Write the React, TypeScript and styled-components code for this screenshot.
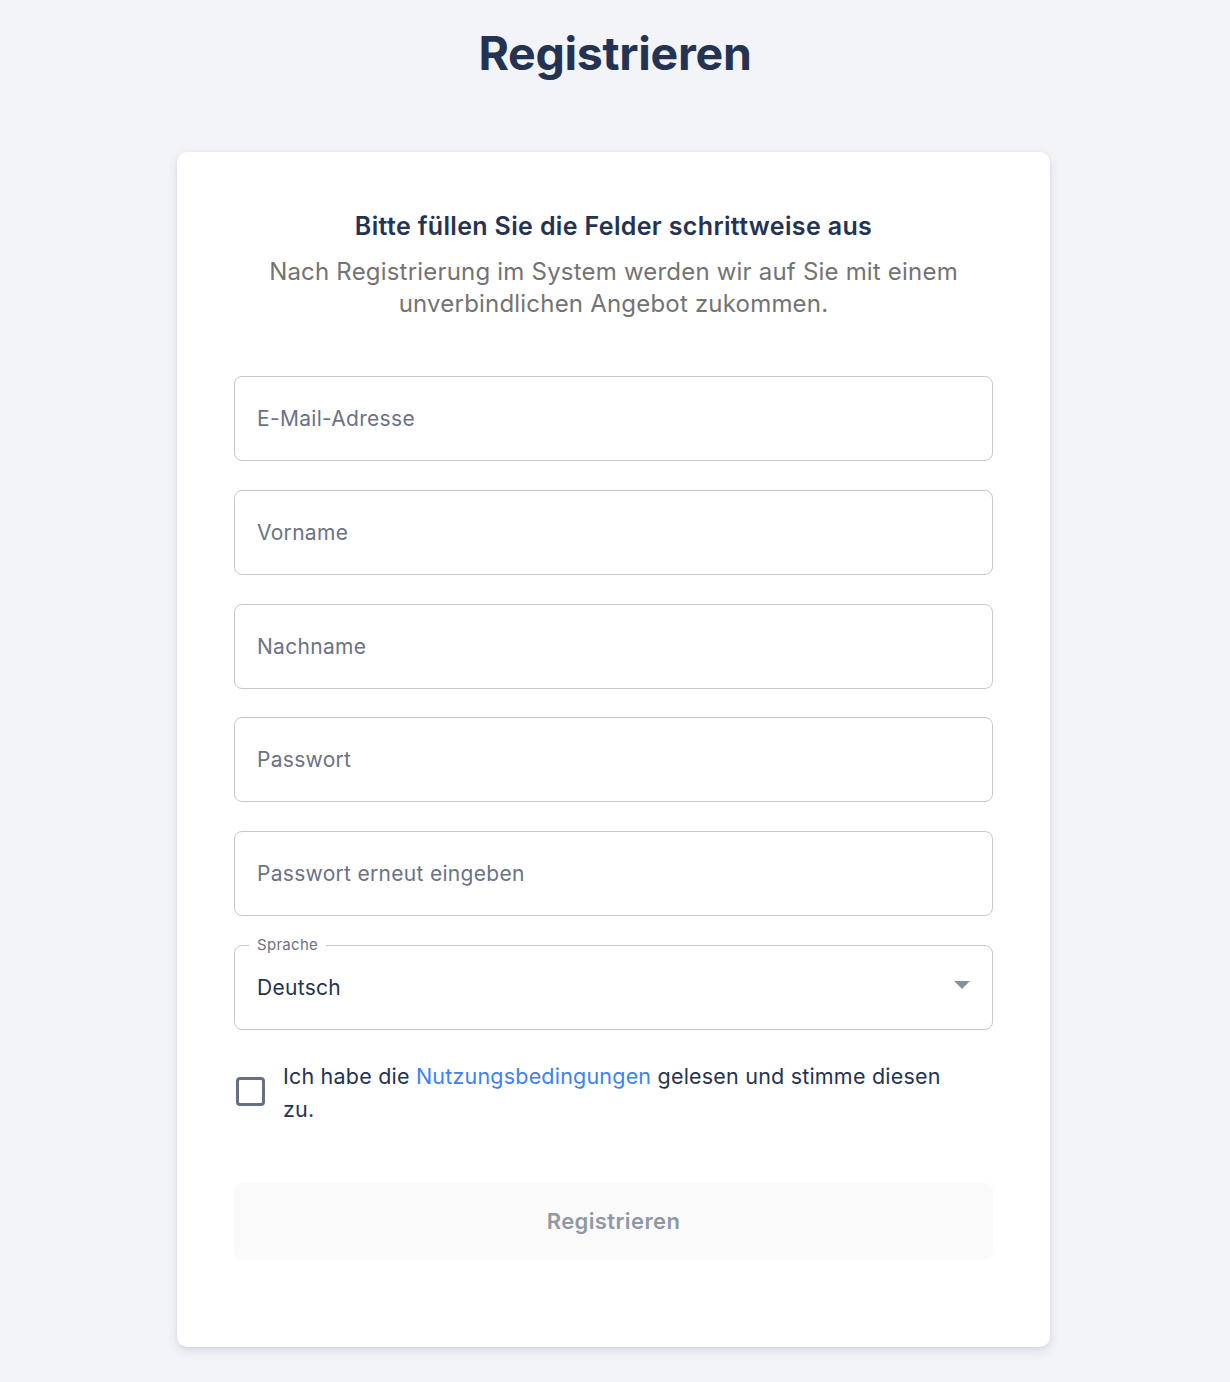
import React from "react";
import styled, { createGlobalStyle } from "styled-components";

const Global = createGlobalStyle`
  html, body { margin: 0; padding: 0; background: #f3f4f8; }
  body { font-family: Inter, "Noto Sans", sans-serif; -webkit-font-smoothing: antialiased; }
  * { box-sizing: border-box; }
`;

const Page = styled.div`
  min-height: 1382px;
  display: flex;
  flex-direction: column;
  align-items: center;
  padding-top: 24px;
`;

const Title = styled.h1`
  margin: 0;
  font-size: 46.5px;
  line-height: 58px;
  font-weight: 700;
  color: #253352;
  letter-spacing: -0.3px;
`;

const Card = styled.div`
  margin-top: 70px;
  margin-right: 3px;
  width: 873px;
  background: #fff;
  border-radius: 10px;
  box-shadow: 0 4px 12px rgba(40, 50, 100, 0.12), 0 1px 3px rgba(40, 50, 100, 0.08);
  padding: 58px 57px 87px;
  display: flex;
  flex-direction: column;
`;

const CardHeading = styled.h2`
  margin: 0;
  text-align: center;
  font-size: 25px;
  line-height: 32px;
  font-weight: 600;
  letter-spacing: 0.35px;
  color: #253352;
`;

const Subtitle = styled.p`
  margin: 14px 0 0;
  text-align: center;
  font-size: 24px;
  line-height: 32px;
  font-weight: 400;
  letter-spacing: 0.2px;
  color: #737373;
  padding: 0 20px;
`;

const Form = styled.form`
  margin-top: 56px;
  display: flex;
  flex-direction: column;
  gap: 28.8px;
`;

const Input = styled.input`
  width: 100%;
  height: 85px;
  border: 1px solid #c8c8cc;
  border-radius: 8px;
  padding: 0 22px;
  font-family: Inter, sans-serif;
  font-size: 21px;
  letter-spacing: 0.3px;
  color: #253352;
  background: #fff;
  outline: none;
  &::placeholder { color: #6b7286; opacity: 1; }
`;

const SelectBox = styled.div`
  position: relative;
  height: 85px;
  border: 1px solid #c8c8cc;
  border-radius: 8px;
  padding: 0 22px;
  display: flex;
  align-items: center;
`;

const FloatingLabel = styled.span`
  position: absolute;
  top: -11px;
  left: 14px;
  font-size: 15px;
  line-height: 20px;
  letter-spacing: 0.3px;
  color: #6b7286;
  padding: 0 8px;
  background: #fff;
`;

const SelectValue = styled.span`
  font-size: 21px;
  letter-spacing: 0.3px;
  color: #253352;
  flex: 1;
`;

const Caret = styled.span`
  width: 0;
  height: 0;
  border-left: 8px solid transparent;
  border-right: 8px solid transparent;
  border-top: 8px solid #8a8f9c;
  margin-top: -4px;
`;

const CheckRow = styled.label`
  display: flex;
  align-items: flex-start;
  gap: 18px;
  margin-top: 1px;
`;

const Box = styled.span`
  flex: none;
  width: 29px;
  height: 29px;
  border: 3px solid #676f84;
  border-radius: 4px;
  margin-top: 17px;
  margin-left: 2px;
`;

const CheckText = styled.span`
  max-width: 662px;
  font-size: 21.5px;
  line-height: 33px;
  letter-spacing: 0.2px;
  color: #253352;
`;

const Link = styled.a`
  color: #3b82f6;
  text-decoration: none;
`;

const Button = styled.button`
  margin-top: 28px;
  height: 77px;
  border: none;
  border-radius: 8px;
  background: #fafafa;
  font-family: Inter, sans-serif;
  font-size: 22px;
  font-weight: 600;
  letter-spacing: 0.4px;
  color: #9097a5;
`;

export default function App() {
  return (
    <>
      <Global />
      <Page>
        <Title>Registrieren</Title>
        <Card>
          <CardHeading>Bitte füllen Sie die Felder schrittweise aus</CardHeading>
          <Subtitle>
            Nach Registrierung im System werden wir auf Sie mit einem unverbindlichen Angebot zukommen.
          </Subtitle>
          <Form onSubmit={(e) => e.preventDefault()}>
            <Input placeholder="E-Mail-Adresse" />
            <Input placeholder="Vorname" />
            <Input placeholder="Nachname" />
            <Input placeholder="Passwort" type="password" />
            <Input placeholder="Passwort erneut eingeben" type="password" />
            <SelectBox>
              <FloatingLabel>Sprache</FloatingLabel>
              <SelectValue>Deutsch</SelectValue>
              <Caret />
            </SelectBox>
            <CheckRow>
              <Box />
              <CheckText>
                Ich habe die <Link href="#">Nutzungsbedingungen</Link> gelesen und stimme diesen zu.
              </CheckText>
            </CheckRow>
            <Button type="button" disabled>Registrieren</Button>
          </Form>
        </Card>
      </Page>
    </>
  );
}
